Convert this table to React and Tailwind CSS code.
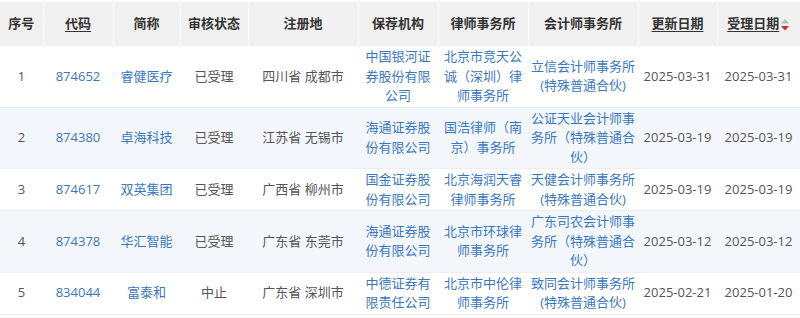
const COLS = [
  { key: 'no', title: '序号', w: 43 },
  { key: 'code', title: '代码', w: 70, sort: true },
  { key: 'name', title: '简称', w: 67 },
  { key: 'status', title: '审核状态', w: 68 },
  { key: 'place', title: '注册地', w: 110 },
  { key: 'sponsor', title: '保荐机构', w: 80 },
  { key: 'law', title: '律师事务所', w: 90 },
  { key: 'acct', title: '会计师事务所', w: 110 },
  { key: 'upd', title: '更新日期', w: 79, sort: true },
  { key: 'acc', title: '受理日期', w: 83, sort: true, active: true },
]

const ROWS = [
  {
    no: 1, code: '874652', name: '睿健医疗', status: '已受理', place: '四川省 成都市',
    sponsor: '中国银河证券股份有限公司', law: '北京市竞天公诚（深圳）律师事务所',
    acct: '立信会计师事务所(特殊普通合伙)', upd: '2025-03-31', acc: '2025-03-31',
  },
  {
    no: 2, code: '874380', name: '卓海科技', status: '已受理', place: '江苏省 无锡市',
    sponsor: '海通证券股份有限公司', law: '国浩律师（南京）事务所',
    acct: '公证天业会计师事务所（特殊普通合伙）', upd: '2025-03-19', acc: '2025-03-19',
  },
  {
    no: 3, code: '874617', name: '双英集团', status: '已受理', place: '广西省 柳州市',
    sponsor: '国金证券股份有限公司', law: '北京海润天睿律师事务所',
    acct: '天健会计师事务所(特殊普通合伙)', upd: '2025-03-19', acc: '2025-03-19',
  },
  {
    no: 4, code: '874378', name: '华汇智能', status: '已受理', place: '广东省 东莞市',
    sponsor: '海通证券股份有限公司', law: '北京市环球律师事务所',
    acct: '广东司农会计师事务所（特殊普通合伙）', upd: '2025-03-12', acc: '2025-03-12',
  },
  {
    no: 5, code: '834044', name: '富泰和', status: '中止', place: '广东省 深圳市',
    sponsor: '中德证券有限责任公司', law: '北京市中伦律师事务所',
    acct: '致同会计师事务所(特殊普通合伙)', upd: '2025-02-21', acc: '2025-01-20',
  },
]

const LINKS = ['code', 'name', 'sponsor', 'law', 'acct']

// Up/down sort arrows; the active direction is red.
function SortIcon() {
  return (
    <svg width="10" height="14" viewBox="0 0 10 14" className="inline-block align-middle ml-[1px]">
      <path d="M1 5.5 L5 1 L9 5.5 Z" fill="#b9b9b9" />
      <path d="M1 8 L5 12.5 L9 8 Z" fill="#d7262c" />
    </svg>
  )
}

export default function App() {
  return (
    <div
      className="w-[800px] pt-[2px] bg-white text-[13px] overflow-hidden"
      style={{ fontFamily: '"Open Sans", "Noto Sans CJK SC", sans-serif' }}
    >
      <table className="w-[800px] table-fixed border-collapse">
        <colgroup>
          {COLS.map((c) => (
            <col key={c.key} style={{ width: c.w }} />
          ))}
        </colgroup>
        <thead>
          <tr className="h-[44px] bg-[#f0f0f0]">
            {COLS.map((c, i) => (
              <th
                key={c.key}
                className={`font-bold text-[#333] text-center px-0 whitespace-nowrap ${
                  i > 0 ? 'border-l border-white' : ''
                }`}
              >
                <span className={c.sort ? 'underline underline-offset-[3px]' : ''}>{c.title}</span>
                {c.active && <SortIcon />}
              </th>
            ))}
          </tr>
        </thead>
        <tbody>
          {ROWS.map((r, ri) => (
            <tr
              key={r.no}
              className={`border-b border-[#eceef1] ${ri % 2 === 1 ? 'bg-[#f3f7fb]' : 'bg-white'}`}
            >
              {COLS.map((c) => (
                <td
                  key={c.key}
                  className={`text-center align-middle px-[2px] py-px leading-[19.5px] ${
                    LINKS.includes(c.key) ? 'text-[#3a78be]' : 'text-[#555]'
                  } ${c.key === 'upd' || c.key === 'acc' ? 'whitespace-nowrap text-[#444]' : ''}`}
                >
                  {r[c.key]}
                </td>
              ))}
            </tr>
          ))}
        </tbody>
      </table>
    </div>
  )
}
